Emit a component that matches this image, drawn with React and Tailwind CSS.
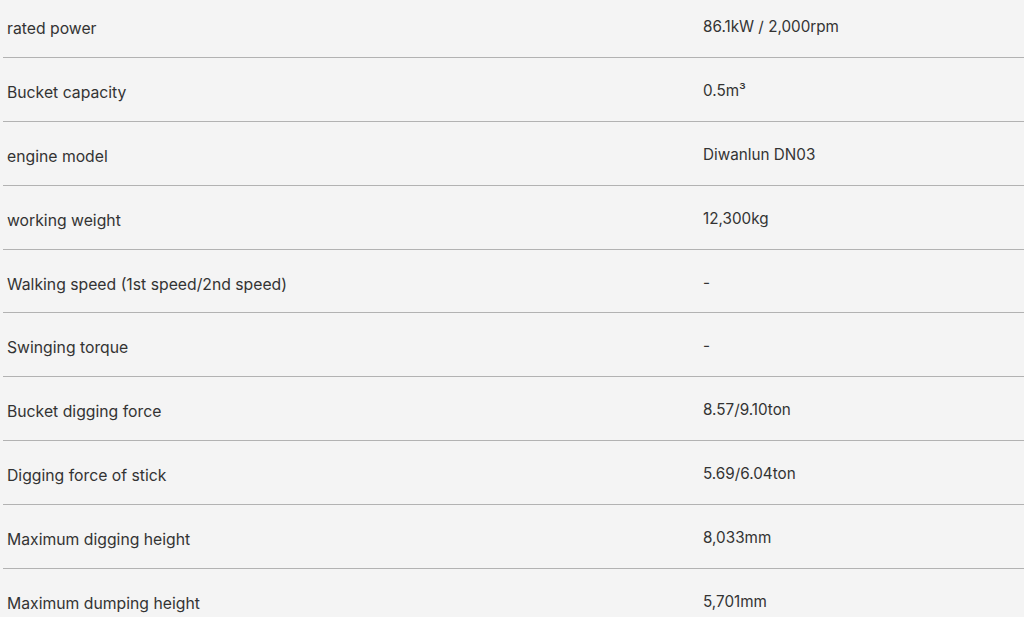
const specs = [
  ["rated power", "86.1kW / 2,000rpm"],
  ["Bucket capacity", "0.5m³"],
  ["engine model", "Diwanlun DN03"],
  ["working weight", "12,300kg"],
  ["Walking speed (1st speed/2nd speed)", "-"],
  ["Swinging torque", "-"],
  ["Bucket digging force", "8.57/9.10ton"],
  ["Digging force of stick", "5.69/6.04ton"],
  ["Maximum digging height", "8,033mm"],
  ["Maximum dumping height", "5,701mm"],
];

export default function App() {
  return (
    <div
      className="w-[1024px] h-[617px] overflow-hidden bg-[#f4f4f4] text-[#333333]"
      style={{ fontFamily: "Inter, 'Liberation Sans', sans-serif" }}
    >
      <div className="ml-[3px] -mt-[6px]">
        {specs.map(([label, value]) => (
          <div key={label} className="flex h-[63.9px] border-b border-[#b2b2b2]">
            <div className="w-[700px] pl-[4px] pt-[24px] text-[15.75px] leading-[22px]">
              {label}
            </div>
            <div className="flex-1 pt-[22px] text-[15.25px] leading-[22px]">{value}</div>
          </div>
        ))}
      </div>
    </div>
  );
}
